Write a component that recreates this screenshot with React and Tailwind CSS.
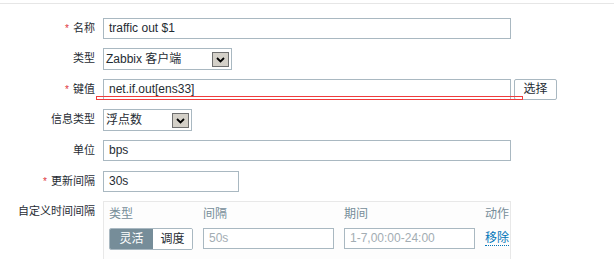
import React from 'react';

const FONT = { fontFamily: '"Liberation Sans", "Noto Sans CJK SC", sans-serif' };

function Label({ text, required }) {
  return (
    <div className="w-[96px] shrink-0 h-[21px] leading-[21px] text-right pr-[1px] text-[11px] text-[#1f2c33] whitespace-nowrap">
      {required && <span className="text-[#e0343c] text-[10px] mr-[4px]">*</span>}
      {text}
    </div>
  );
}

function TextInput({ value, width, placeholder }) {
  return (
    <div
      className={`h-[21px] border border-[#a9b8c1] bg-white pl-[5px] leading-[19px] text-[12px] ${
        placeholder ? 'text-[#a3adb3]' : 'text-[#1f2c33]'
      } ${width}`}
    >
      {value}
    </div>
  );
}

function Select({ value, width }) {
  return (
    <div className={`relative h-[22px] border border-[#a9b8c1] bg-white pl-[2px] leading-[20px] text-[12px] text-[#1f2c33] ${width}`}>
      {value}
      <div className="absolute right-[2px] top-[3px] w-[17px] h-[15px] bg-[#d4d0c8] border border-[#6f6f6f] flex items-center justify-center">
        <svg width="9" height="6" viewBox="0 0 9 6">
          <path d="M1 1 L4.5 4.5 L8 1" fill="none" stroke="#000" strokeWidth="1.8" />
        </svg>
      </div>
    </div>
  );
}

export default function App() {
  return (
    <div className="w-[614px] h-[259px] overflow-hidden bg-white pt-[3px]" style={FONT}>
      <div className="border-t border-[#e6e6e6]" />
      <div className="relative pt-[14px] flex flex-col">
        {/* 名称 */}
        <div className="flex gap-[7px] h-[30px]">
          <Label text="名称" required />
          <TextInput value="traffic out $1" width="w-[408px]" />
        </div>
        {/* 类型 */}
        <div className="flex gap-[7px] h-[31px]">
          <Label text="类型" />
          <Select value="Zabbix 客户端" width="w-[129px]" />
        </div>
        {/* 键值 */}
        <div className="flex gap-[7px] h-[30px]">
          <Label text="键值" required />
          <div className="flex gap-[3px]">
            <TextInput value="net.if.out[ens33]" width="w-[408px]" />
            <button className="h-[21px] w-[43px] border border-[#a9b8c1] rounded-[2px] bg-white text-[12px] text-[#1f2c33] leading-[19px]">
              选择
            </button>
          </div>
        </div>
        {/* 信息类型 */}
        <div className="flex gap-[7px] h-[31px]">
          <Label text="信息类型" />
          <Select value="浮点数" width="w-[89px]" />
        </div>
        {/* 单位 */}
        <div className="flex gap-[7px] h-[31px]">
          <Label text="单位" />
          <TextInput value="bps" width="w-[408px]" />
        </div>
        {/* 更新间隔 */}
        <div className="flex gap-[7px] h-[30px]">
          <Label text="更新间隔" required />
          <TextInput value="30s" width="w-[136px]" />
        </div>
        {/* 自定义时间间隔 */}
        <div className="flex gap-[7px]">
          <Label text="自定义时间间隔" />
          <div className="w-[408px] h-[70px] border border-[#e8e8e8] bg-[#fdfdfd] pl-[5px] pt-[5px]">
            <div className="grid grid-cols-[84px_131px_131px_auto] gap-x-[10px] gap-y-[7px] text-[12px]">
              <div className="text-[#768d99] leading-[14px]">类型</div>
              <div className="text-[#768d99] leading-[14px]">间隔</div>
              <div className="text-[#768d99] leading-[14px]">期间</div>
              <div className="text-[#768d99] leading-[14px]">动作</div>
              <div className="flex h-[22px] rounded-[2px] border border-[#a9b8c1] overflow-hidden">
                <div className="w-[43px] bg-[#768d99] text-white leading-[20px] text-center">灵活</div>
                <div className="flex-1 bg-white text-[#1f2c33] leading-[20px] text-center">调度</div>
              </div>
              <TextInput value="50s" width="w-[131px]" placeholder />
              <TextInput value="1-7,00:00-24:00" width="w-[131px]" placeholder />
              <div className="leading-[21px]">
                <span className="text-[#0275b8] border-b border-dotted border-[#0275b8]">移除</span>
              </div>
            </div>
          </div>
        </div>
        {/* red spell-check box over the key row */}
        <div className="absolute left-[96px] top-[92px] w-[427px] h-[4px] border border-[#f03c3c] pointer-events-none" />
      </div>
    </div>
  );
}
